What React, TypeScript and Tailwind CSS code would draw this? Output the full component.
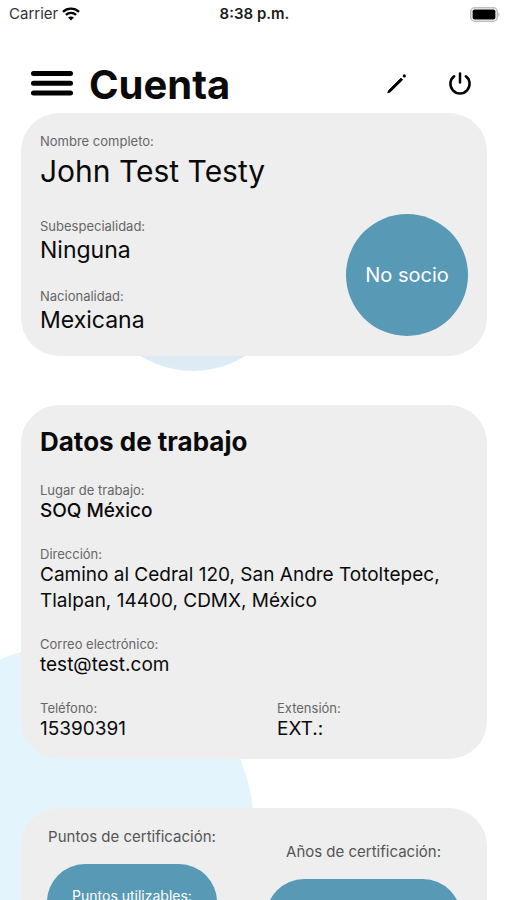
import type { ReactNode } from "react";

function StatusBar() {
  return (
    <div className="grid h-7 grid-cols-3 items-center pr-[7px] pl-[9px] text-[15px] leading-5">
      <div className="flex items-center gap-1">
        <span className="text-[#333333]">Carrier</span>
        <svg width="18" height="14" viewBox="0 0 18 14" fill="none" stroke="#000" aria-hidden="true">
          <path d="M1 4.800C5.500 .6 12.500 .6 17 4.800" strokeWidth="2.300" />
          <path d="M3.900 7.900C6.800 5.200 11.200 5.200 14.100 7.900" strokeWidth="2.200" />
          <path d="M9 13.600 6.100 10.600C7.700 9.200 10.300 9.200 11.900 10.600Z" fill="#000" stroke="none" />
        </svg>
      </div>
      <span className="text-center font-semibold whitespace-nowrap text-[#1c1c1c]">8:38 p.m.</span>
      <svg className="justify-self-end" width="30" height="15" viewBox="0 0 30 15" aria-hidden="true">
        <rect x="0.800" y="0.800" width="26.400" height="13.400" rx="4" fill="#fff" stroke="#bdbdbd" strokeWidth="1.500" />
        <rect x="2.600" y="2.600" width="22.800" height="9.800" rx="2" fill="#000" />
        <path d="M28.300 5.300c1.600.6 1.600 3.800 0 4.400z" fill="#bdbdbd" />
      </svg>
    </div>
  );
}

function Header() {
  return (
    <header className="flex h-[85px] items-center pt-[26px] pr-[34px] pl-[31px]">
      <button type="button" aria-label="Menú" className="shrink-0">
        <svg width="42" height="26" viewBox="0 0 42 26" stroke="#000" strokeWidth="5" strokeLinecap="round" className="block">
          <path d="M2.500 2.500h37M2.500 12.300h37M2.500 22.100h37" />
        </svg>
      </button>
      <h1 className="ml-4 flex-1 pt-[2px] text-[40px] leading-[48px] font-bold">Cuenta</h1>
      <button type="button" aria-label="Editar" className="mr-[37px]">
        <svg width="26" height="26" viewBox="0 0 26 26" stroke="#000" className="block">
          <path d="M3.800 21.800 4.700 19.400 17 7.200 18.600 8.800 6.200 20.900Z" strokeWidth="1" strokeLinejoin="round" />
          <circle cx="20.300" cy="4.900" r="1.600" stroke="none" />
        </svg>
      </button>
      <button type="button" aria-label="Cerrar sesión">
        <svg width="26" height="26" viewBox="0 0 26 26" fill="none" stroke="#000" strokeWidth="2.500" strokeLinecap="round" className="block">
          <path d="M13 2.500v9" />
          <path d="M7.200 5.200A9.600 9.600 0 1 0 18.800 5.200" />
        </svg>
      </button>
    </header>
  );
}

function Card({ className, children }: { className: string; children: ReactNode }) {
  return <section className={`relative rounded-[38px] bg-[#eeeeee] ${className}`}>{children}</section>;
}

function Field({ label, value, valueClass }: { label: string; value: string; valueClass: string }) {
  return (
    <div>
      <dt className="text-[13px] leading-4 text-[#666666]">{label}</dt>
      <dd className={valueClass}>{value}</dd>
    </div>
  );
}

const large = "text-[23px] leading-8";
const medium = "text-[19px] leading-[26px]";

export default function App() {
  return (
    <div className="relative h-screen overflow-hidden bg-white font-['Inter','Liberation_Sans',sans-serif] text-[#0a0a0a]">
      <div className="absolute top-[173px] left-[94px] size-[198px] rounded-full bg-linear-to-b from-[#c5d8e6] to-[#dfecf6]" />
      <div className="absolute top-[645px] left-[-112px] size-[366px] rounded-full bg-[#e4f4fd]" />

      <div className="relative">
        <StatusBar />
        <Header />
        <main className="flex flex-col gap-[49px] pr-5 pl-[21px]">
          <Card className="flex items-end justify-between px-[19px] pt-5 pb-5">
            <dl className="flex flex-col">
              <Field label="Nombre completo:" value="John Test Testy" valueClass="text-[30px] leading-[44px]" />
              <div className="mt-[25px] flex flex-col gap-[22px]">
                <Field label="Subespecialidad:" value="Ninguna" valueClass={large} />
                <Field label="Nacionalidad:" value="Mexicana" valueClass={large} />
              </div>
            </dl>
            <div className="flex size-[122px] shrink-0 items-center justify-center rounded-full bg-[#5899b6] text-xl text-white">
              No socio
            </div>
          </Card>

          <Card className="px-[19px] pt-[21px] pb-[17px]">
            <h2 className="mb-6 text-[26px] leading-8 font-bold">Datos de trabajo</h2>
            <dl className="flex flex-col gap-[22px]">
              <Field label="Lugar de trabajo:" value="SOQ México" valueClass={`${medium} font-medium`} />
              <Field label="Dirección:" value="Camino al Cedral 120, San Andre Totoltepec, Tlalpan, 14400, CDMX, México" valueClass={medium} />
              <Field label="Correo electrónico:" value="test@test.com" valueClass={medium} />
              <div className="grid grid-cols-[237px_1fr]">
                <Field label="Teléfono:" value="15390391" valueClass={medium} />
                <Field label="Extensión:" value="EXT.:" valueClass={medium} />
              </div>
            </dl>
          </Card>

          <Card className="flex items-start gap-[49px] px-[26px] pt-[19px] pb-8 text-center">
            <div className="flex-[170]">
              <h3 className="text-[15px] leading-5 whitespace-nowrap text-[#555555]">Puntos de certificación:</h3>
              <div className="mt-[17px] h-40 rounded-[38px] bg-[#5899b6] pt-6 text-[14px] leading-4 text-white">
                Puntos utilizables:
              </div>
            </div>
            <div className="flex-[195] pt-[15px]">
              <h3 className="text-[15px] leading-5 whitespace-nowrap text-[#555555]">Años de certificación:</h3>
              <div className="mt-[17px] h-[130px] rounded-[38px] bg-[#5899b6]" />
            </div>
          </Card>
        </main>
      </div>
    </div>
  );
}
